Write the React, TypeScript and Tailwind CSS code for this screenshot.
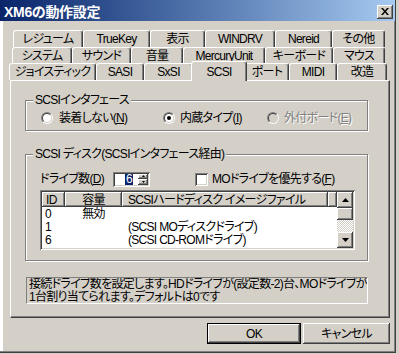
const raised =
  "bg-[#d4d0c8] shadow-[inset_-1px_-1px_0_#404040,inset_1px_1px_0_#fff,inset_-2px_-2px_0_#808080,inset_2px_2px_0_#d4d0c8]";
const sunken =
  "shadow-[inset_1px_1px_0_#808080,inset_-1px_-1px_0_#fff,inset_2px_2px_0_#404040,inset_-2px_-2px_0_#d4d0c8]";
const etched = "border border-[#808080] shadow-[inset_1px_1px_0_#fff,1px_1px_0_#fff]";
const disabled = "text-[#808080] [text-shadow:1px_1px_0_#fff]";

const row1 = [
  ["レジューム", "w-[70px]"],
  ["TrueKey", "w-[67px]"],
  ["表示", "w-[55px]"],
  ["WINDRV", "w-[70px]"],
  ["Nereid", "w-[57px]"],
  ["その他", "w-[53px]"],
];
const row2 = [
  ["システム", "w-[60px]"],
  ["サウンド", "w-[59px]"],
  ["音量", "w-[52px]"],
  ["MercuryUnit", "w-[82px]"],
  ["キーボード", "w-[68px]"],
  ["マウス", "w-[52px]"],
];
const row3 = [
  ["ジョイスティック", "w-[87px]"],
  ["SASI", "w-[48px]"],
  ["SxSI", "w-[49px]"],
  ["SCSI", "sel"],
  ["ポート", "w-[44px]"],
  ["MIDI", "w-[48px]"],
  ["改造", "w-[50px]"],
];

function Tab({ label, w }: { label: string; w: string }) {
  if (w === "sel") {
    return (
      <div className="relative z-10 self-start -mt-[2px] -mx-[2px] w-[56px] h-[20px] shrink-0 bg-[#d4d0c8] flex justify-center pt-[4px] border-t border-l border-r border-t-white border-l-white border-r-[#404040] rounded-t-[3px] shadow-[inset_-1px_0_0_#808080]">
        {label}
      </div>
    );
  }
  return (
    <div
      className={`${w} h-full shrink-0 flex items-center justify-center border-t border-l border-r border-t-white border-l-white border-r-[#404040] rounded-t-[3px] shadow-[inset_-1px_0_0_#808080]`}
    >
      {label}
    </div>
  );
}

function Radio({ checked, off }: { checked?: boolean; off?: boolean }) {
  return (
    <span className="w-[12px] h-[12px] shrink-0 rounded-full border border-t-[#808080] border-l-[#808080] border-r-white border-b-white flex">
      <span
        className={`flex-1 rounded-full border border-t-[#404040] border-l-[#404040] border-r-[#d4d0c8] border-b-[#d4d0c8] flex items-center justify-center ${
          off ? "bg-[#d4d0c8]" : "bg-white"
        }`}
      >
        {checked && <span className="w-[4px] h-[4px] rounded-full bg-black" />}
      </span>
    </span>
  );
}

function Arrow({ down }: { down?: boolean }) {
  return (
    <svg width="7" height="4" viewBox="0 0 7 4">
      <polygon points={down ? "0,0 7,0 3.5,4" : "0,4 7,4 3.5,0"} fill="#000" />
    </svg>
  );
}

export default function App() {
  return (
    <div className="w-[399px] h-[354px] bg-[#d4d0c8] overflow-hidden font-['Liberation_Sans','Noto_Sans_CJK_JP',sans-serif] text-[12px] leading-none tracking-[-0.7px] text-black [font-feature-settings:'palt']">
      <div className="w-[396px] h-[353px] flex flex-col shadow-[inset_-1px_-1px_0_#404040,inset_-2px_-2px_0_#808080,inset_3px_0_0_#fff,inset_2px_0_0_#d4d0c8]">
        {/* title bar */}
        <div className="h-[21px] mr-[1px] shrink-0 bg-linear-to-r from-[#0a246a] to-[#a6caf0] flex items-center justify-between pl-[4px] pr-[2px] pt-[2px]">
          <span className="text-white font-bold text-[14px] tracking-[-0.3px]">XM6の動作設定</span>
          <div className={`w-[16px] h-[14px] flex items-center justify-center ${raised}`}>
            <svg width="8" height="7" viewBox="0 0 8 7">
              <path d="M0 0 L2 0 L4 2.5 L6 0 L8 0 L5 3.5 L8 7 L6 7 L4 4.5 L2 7 L0 7 L3 3.5 Z" fill="#000" />
            </svg>
          </div>
        </div>

        {/* tabs */}
        <div className="mt-[9px] flex flex-col">
          <div className="flex h-[17px] pl-[13px]">
            {row1.map(([l, w]) => (
              <Tab key={l} label={l} w={w} />
            ))}
          </div>
          <div className="flex h-[16px] pl-[12px]">
            {row2.map(([l, w]) => (
              <Tab key={l} label={l} w={w} />
            ))}
          </div>
          <div className="flex h-[17px] pl-[9px]">
            {row3.map(([l, w]) => (
              <Tab key={l} label={l} w={w} />
            ))}
          </div>
        </div>

        {/* panel */}
        <div className="ml-[10px] w-[380px] h-[238px] border border-t-white border-l-white border-r-[#404040] border-b-[#404040] shadow-[inset_-1px_-1px_0_#808080] pl-[14px] pt-[19px]">
          {/* group 1 */}
          <div className={`relative w-[343px] h-[31px] ${etched}`}>
            <span className="absolute -top-[7px] left-[7px] px-[2px] bg-[#d4d0c8]">SCSIインタフェース</span>
            <div className="flex items-center h-full pl-[15px] pt-[4px]">
              <div className="w-[122px] flex items-center gap-[6px]">
                <Radio />
                <span>
                  装着しない(<u>N</u>)
                </span>
              </div>
              <div className="w-[104px] flex items-center gap-[5px]">
                <Radio checked />
                <span>
                  内蔵タイプ(<u>I</u>)
                </span>
              </div>
              <div className="flex items-center gap-[5px]">
                <Radio off />
                <span className={disabled}>
                  外付ボード(<u>E</u>)
                </span>
              </div>
            </div>
          </div>

          {/* group 2 */}
          <div className={`relative mt-[23px] w-[343px] h-[107px] ${etched} pl-[14px] pt-[17px]`}>
            <span className="absolute -top-[7px] left-[7px] px-[2px] bg-[#d4d0c8]">
              SCSI ディスク(SCSIインタフェース経由)
            </span>
            <div className="flex items-center h-[14px]">
              <span className="w-[73px]">
                ドライブ数(<u>D</u>)
              </span>
              <div className={`w-[37px] h-[15px] bg-white flex p-[2px] ${sunken}`}>
                <div className="flex-1 pl-[10px] flex items-center">
                  <span className="bg-[#0a246a] text-white px-[1px] leading-[11px]">6</span>
                </div>
                <div className="w-[10px] flex flex-col">
                  <div className={`flex-1 flex items-center justify-center ${raised}`}>
                    <svg width="3" height="2" viewBox="0 0 3 2">
                      <polygon points="0,2 3,2 1.5,0" fill="#000" />
                    </svg>
                  </div>
                  <div className={`flex-1 flex items-center justify-center ${raised}`}>
                    <svg width="3" height="2" viewBox="0 0 3 2">
                      <polygon points="0,0 3,0 1.5,2" fill="#000" />
                    </svg>
                  </div>
                </div>
              </div>
              <span className={`ml-[45px] w-[13px] h-[13px] bg-white shrink-0 ${sunken}`} />
              <span className="ml-[4px]">
                MOドライブを優先する(<u>F</u>)
              </span>
            </div>

            {/* list view */}
            <div className={`mt-[4px] w-[315px] h-[60px] bg-white p-[2px] flex ${sunken}`}>
              <div className="flex-1 flex flex-col">
                <div className="flex h-[15px] shrink-0">
                  <div className={`w-[23px] flex items-center pl-[4px] ${raised}`}>ID</div>
                  <div className={`w-[57px] flex items-center justify-center ${raised}`}>容量</div>
                  <div className={`w-[206px] flex items-center pl-[6px] ${raised}`}>
                    SCSIハードディスク イメージファイル
                  </div>
                  <div className={`flex-1 ${raised}`} />
                </div>
                {[
                  ["0", "無効", ""],
                  ["1", "", "(SCSI MOディスクドライブ)"],
                  ["6", "", "(SCSI CD-ROMドライブ)"],
                ].map(([id, cap, file]) => (
                  <div key={id} className="flex h-[13px] items-center">
                    <span className="w-[23px] pl-[3px]">{id}</span>
                    <span className="w-[57px] text-center">{cap}</span>
                    <span className="pl-[6px] whitespace-nowrap">{file}</span>
                  </div>
                ))}
              </div>
              <div className="w-[16px] flex flex-col">
                <div className={`h-[16px] flex items-center justify-center ${raised}`}>
                  <Arrow />
                </div>
                <div className={`h-[12px] ${raised}`} />
                <div className="flex-1 bg-[repeating-conic-gradient(#fff_0_25%,#d4d0c8_0_50%)] bg-[length:2px_2px]" />
                <div className={`h-[16px] flex items-center justify-center ${raised}`}>
                  <Arrow down />
                </div>
              </div>
            </div>
          </div>

          {/* status text */}
          <div className="mt-[16px] ml-[1px] w-[342px] h-[27px] border border-t-[#808080] border-l-[#808080] border-r-white border-b-white pl-[2px] leading-[13px] whitespace-nowrap overflow-hidden">
            接続ドライブ数を設定します。HDドライブが(設定数-2)台、MOドライブが
            <br />
            1台割り当てられます。デフォルトは0です
          </div>
        </div>

        {/* buttons */}
        <div className="mt-[5px] flex pl-[207px] gap-[2px]">
          <div className="w-[94px] h-[21px] border border-black">
            <div className={`w-full h-full flex items-center justify-center ${raised}`}>OK</div>
          </div>
          <div className={`w-[87px] h-[21px] flex items-center justify-center ${raised}`}>キャンセル</div>
        </div>
      </div>
    </div>
  );
}
